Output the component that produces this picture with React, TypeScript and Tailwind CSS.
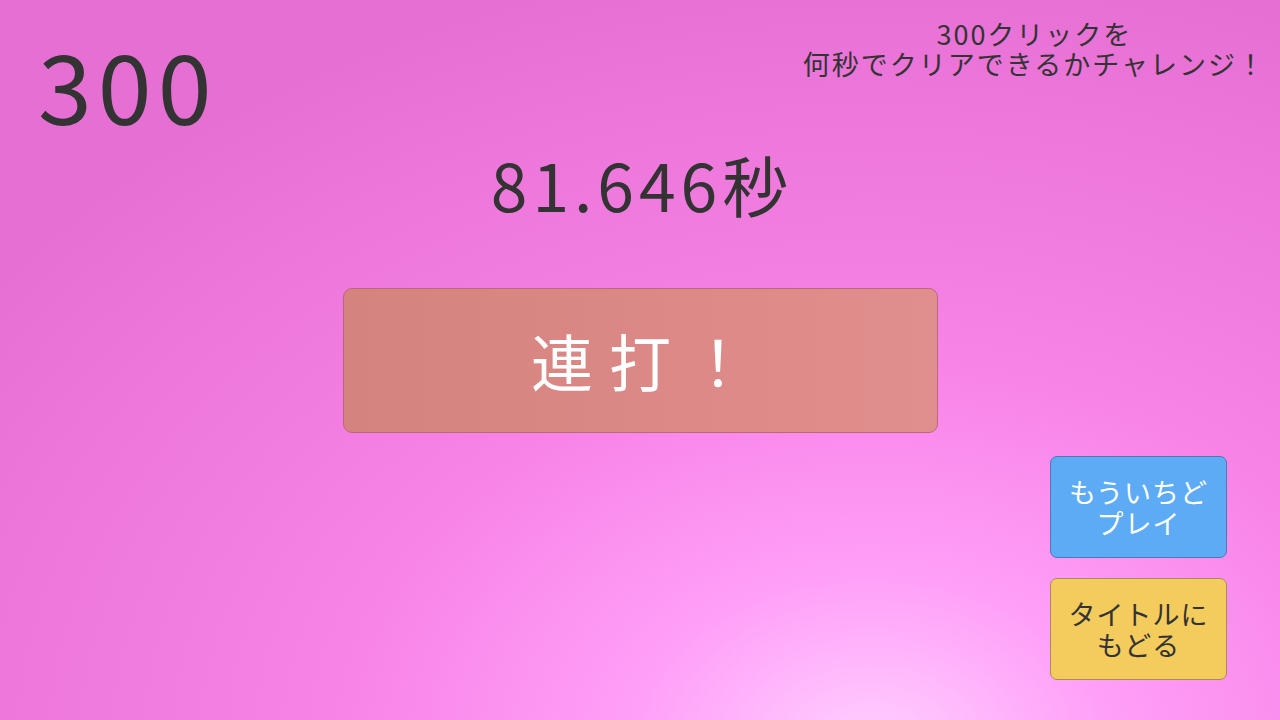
import React from "react"

const font = { fontFamily: '"Noto Sans CJK JP", "Noto Sans", sans-serif' }

function SideButton({ label, className }: { label: React.ReactNode; className: string }) {
  return (
    <button
      type="button"
      className={`w-[177px] h-[102px] rounded-[7px] border text-[27px] leading-[31px] tracking-[1px] ${className}`}
    >
      {label}
    </button>
  )
}

export default function App() {
  return (
    <div
      style={font}
      className="relative h-[720px] w-full overflow-hidden flex flex-col text-[#333333] bg-[radial-gradient(ellipse_85%_110%_at_68%_104%,#ffcfff_0%,#ff9ff8_22%,#f884e8_48%,#e66fd3_100%)]"
    >
      <header className="flex justify-between items-start">
        <div className="pl-[38px] pt-[34px] pb-[4px] text-[97px] leading-[97px] tracking-[6px] font-normal">300</div>
        <div className="pr-[14px] pt-[19px] text-[27px] leading-[30px] tracking-[2px] text-center">
          <p>300クリックを</p>
          <p>何秒でクリアできるかチャレンジ！</p>
        </div>
      </header>

      <main className="flex flex-col items-center">
        <div className="mt-[8px] pl-[4px] text-[66px] leading-[80px] tracking-[5px]">81.646秒</div>
        <button
          type="button"
          className="mt-[65px] w-[595px] h-[145px] rounded-[9px] border border-[#b8697a] bg-gradient-to-r from-[#d5837e] to-[#e18e8e] text-white text-[62px] tracking-[16px] pl-[16px]"
        >
          連打！
        </button>
      </main>

      <footer className="flex-1 flex flex-col items-end justify-end gap-[20px] pr-[53px] pb-[40px]">
        <SideButton
          className="bg-[#5eabf5] border-[#4d79b6] text-white"
          label={
            <>
              もういちど
              <br />
              プレイ
            </>
          }
        />
        <SideButton
          className="bg-[#f4cb5d] border-[#a88d5a] text-[#333333]"
          label={
            <>
              タイトルに
              <br />
              もどる
            </>
          }
        />
      </footer>
    </div>
  )
}
